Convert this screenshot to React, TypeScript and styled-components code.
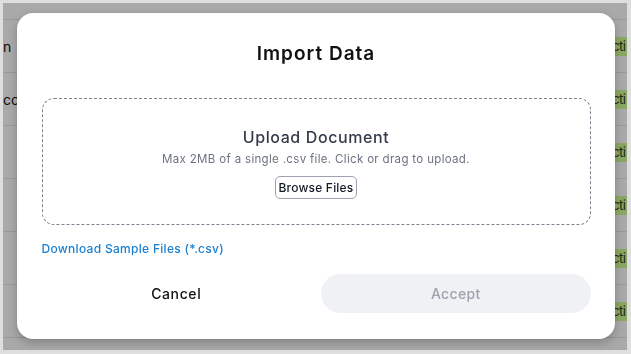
import React from "react";
import styled, { createGlobalStyle } from "styled-components";

const Global = createGlobalStyle`
  html, body { margin: 0; padding: 0; }
  body {
    width: 631px;
    height: 354px;
    overflow: hidden;
    background: #dedede;
    font-family: Inter, "Noto Sans", "Liberation Sans", sans-serif;
  }
`;

const Frame = styled.div`
  box-sizing: border-box;
  width: 631px;
  height: 354px;
  padding: 3px 4px 4px 3px;
`;

const Table = styled.div`
  height: 100%;
  background: #a9a9a9;
  display: flex;
  flex-direction: column;
  padding-top: 16px;
  box-sizing: border-box;
  overflow: hidden;
`;

const Row = styled.div`
  flex: 0 0 53px;
  box-sizing: border-box;
  border-top: 1px solid #989898;
  display: flex;
  align-items: center;
  justify-content: space-between;
  font-size: 14px;
  color: #0d0d0d;
`;

const Cell = styled.span`
  white-space: nowrap;
`;

const Badge = styled.span`
  background: #8aa862;
  color: #1e2a12;
  font-size: 13.5px;
  line-height: 19px;
  padding: 0 0 0 1px;
  width: 15px;
  letter-spacing: -0.7px;
  white-space: nowrap;
  overflow: hidden;
`;

const Overlay = styled.div`
  position: fixed;
  inset: 0;
  display: flex;
  align-items: center;
  justify-content: center;
`;

const Modal = styled.div`
  box-sizing: border-box;
  width: 598px;
  height: 326px;
  margin-top: -2px;
  background: #ffffff;
  border-radius: 16px;
  box-shadow: 0 4px 10px rgba(0, 0, 0, 0.22), 0 0 2px rgba(0, 0, 0, 0.1);
  padding: 29px 24px 26px 25px;
  display: flex;
  flex-direction: column;
`;

const Title = styled.h2`
  margin: 0;
  text-align: center;
  font-size: 19px;
  line-height: 24px;
  font-weight: 600;
  color: #111111;
  letter-spacing: 1px;
`;

const DropZone = styled.div`
  margin-top: 32px;
  height: 127px;
  box-sizing: border-box;
  border: 1px dashed #7b8290;
  border-radius: 12px;
  padding-top: 27px;
  display: flex;
  flex-direction: column;
  align-items: center;
`;

const ZoneTitle = styled.div`
  font-size: 16px;
  line-height: 22px;
  font-weight: 500;
  color: #333b49;
  letter-spacing: 0.6px;
`;

const ZoneHint = styled.div`
  margin-top: 2px;
  font-size: 11.5px;
  line-height: 18px;
  color: #6b7280;
  letter-spacing: 0.33px;
`;

const BrowseButton = styled.button`
  margin-top: 8px;
  height: 23px;
  width: 82px;
  padding: 0;
  border: 1px solid #9ca3af;
  border-radius: 5px;
  background: #ffffff;
  font-family: inherit;
  font-size: 12px;
  font-weight: 500;
  color: #111827;
  letter-spacing: 0.2px;
`;

const SampleLink = styled.a`
  margin-top: 15px;
  align-self: flex-start;
  font-size: 12px;
  line-height: 18px;
  font-weight: 500;
  color: #1a7fd0;
  text-decoration: none;
  letter-spacing: 0.3px;
`;

const Footer = styled.div`
  margin-top: 16px;
  display: grid;
  grid-template-columns: 1fr 1fr;
  gap: 10px;
`;

const FooterButton = styled.button<{ $primary?: boolean }>`
  height: 39px;
  border: none;
  border-radius: 20px;
  font-family: inherit;
  font-size: 14px;
  font-weight: 500;
  letter-spacing: ${(p) => (p.$primary ? "0.35px" : "0.6px")};
  background: ${(p) => (p.$primary ? "#f0f1f4" : "transparent")};
  color: ${(p) => (p.$primary ? "#9ca3af" : "#111111")};
`;

const rows = ["n", "cc", "", "", "", "", ""];

export default function App() {
  return (
    <>
      <Global />
      <Frame>
        <Table>
          {rows.map((r, i) => (
            <Row key={i}>
              <Cell>{r}</Cell>
              {i < 6 ? <Badge>cti</Badge> : <span />}
            </Row>
          ))}
        </Table>
      </Frame>
      <Overlay>
        <Modal>
          <Title>Import Data</Title>
          <DropZone>
            <ZoneTitle>Upload Document</ZoneTitle>
            <ZoneHint>Max 2MB of a single .csv file. Click or drag to upload.</ZoneHint>
            <BrowseButton>Browse Files</BrowseButton>
          </DropZone>
          <SampleLink href="#">Download Sample Files (*.csv)</SampleLink>
          <Footer>
            <FooterButton>Cancel</FooterButton>
            <FooterButton $primary>Accept</FooterButton>
          </Footer>
        </Modal>
      </Overlay>
    </>
  );
}
